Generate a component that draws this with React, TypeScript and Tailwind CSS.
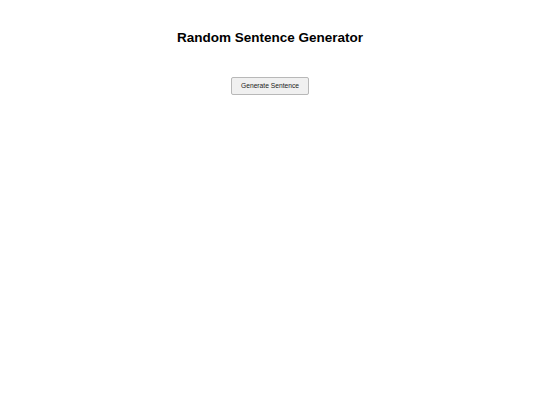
export default function App() {
  return (
    <div className="min-h-screen bg-white text-center font-['Liberation_Sans',Arial,sans-serif] text-black">
      <h1 className="pt-[30px] text-[13.5px] leading-[16px] font-bold">Random Sentence Generator</h1>
      <div className="mt-[31px] flex justify-center">
        <button className="h-[18px] w-[78px] rounded-[2px] border border-[#b8b8b8] bg-[#f0f0f0] text-[6.7px] leading-none text-[#222]">
          Generate Sentence
        </button>
      </div>
    </div>
  );
}
